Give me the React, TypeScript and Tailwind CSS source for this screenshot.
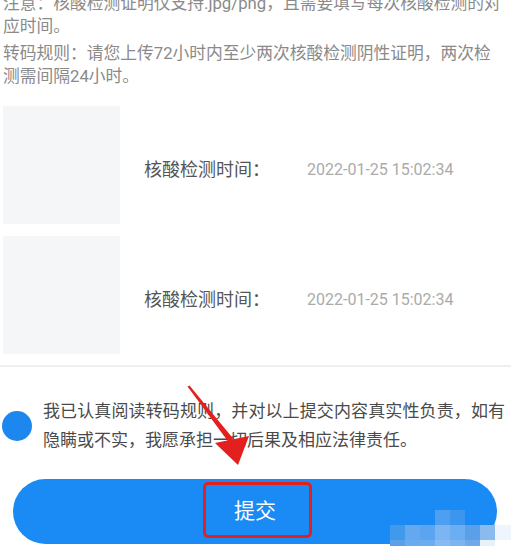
import React from "react";

const FONT = 'Roboto, "Noto Sans CJK SC", "Noto Sans", sans-serif';

function Row() {
  return (
    <div className="flex items-center h-[118px]">
      <div className="w-[117px] h-[118px] bg-[#f4f6f8] shrink-0" />
      <div className="ml-[24px] pt-[10px] text-[18px] leading-[24px] text-[#555555] whitespace-nowrap">
        核酸检测时间：
      </div>
      <div className="ml-[37px] pt-[10px] text-[16px] leading-[24px] text-[#ababab] whitespace-nowrap">
        2022-01-25 15:02:34
      </div>
    </div>
  );
}

const mosaic: { x: number; y: number; w: number; h: number; c: string }[] = [
  { x: 435, y: 510, w: 15, h: 15, c: "#4f9ff0" },
  { x: 450, y: 510, w: 15, h: 15, c: "#3d96ee" },
  { x: 390, y: 525, w: 15, h: 15, c: "#4199ec" },
  { x: 405, y: 525, w: 15, h: 15, c: "#64a9ef" },
  { x: 420, y: 525, w: 15, h: 15, c: "#5ba5f0" },
  { x: 435, y: 525, w: 15, h: 15, c: "#7bb6f3" },
  { x: 450, y: 525, w: 15, h: 15, c: "#6baef1" },
  { x: 465, y: 525, w: 15, h: 15, c: "#5b9fe9" },
  { x: 480, y: 525, w: 15, h: 15, c: "#8bbaef" },
  { x: 495, y: 525, w: 16, h: 15, c: "#eef5fc" },
  { x: 390, y: 540, w: 15, h: 6, c: "#5aa1e9" },
  { x: 405, y: 540, w: 15, h: 6, c: "#69adf1" },
  { x: 420, y: 540, w: 15, h: 6, c: "#6cadf0" },
  { x: 435, y: 540, w: 15, h: 6, c: "#86bcf3" },
  { x: 450, y: 540, w: 15, h: 6, c: "#7ab4f1" },
  { x: 465, y: 540, w: 15, h: 6, c: "#6ea9ec" },
  { x: 480, y: 540, w: 15, h: 6, c: "#e6f1fb" },
  { x: 495, y: 540, w: 16, h: 6, c: "#ffffff" },
];

export default function App() {
  return (
    <div
      className="relative w-[511px] h-[546px] bg-white overflow-hidden"
      style={{ fontFamily: FONT }}
    >
      <div className="-mt-[8px] pl-[3px] text-[16.75px] leading-[23px] text-[#8a8a8a] whitespace-nowrap">
        <p>
          注意：核酸检测证明仅支持.jpg/png，且需要填写每次核酸检测的对
          <br />
          应时间。
        </p>
        <p className="mt-[4px]">
          转码规则：请您上传72小时内至少两次核酸检测阴性证明，两次检
          <br />
          测需间隔24小时。
        </p>
      </div>

      <div className="mt-[18px] pl-[3px] flex flex-col gap-[12px]">
        <Row />
        <Row />
      </div>

      <div className="mt-[11px] h-[2px] bg-[#efefef]" />

      <div className="mt-[30px] flex items-center">
        <div className="ml-[2px] w-[30px] h-[30px] rounded-full bg-[#1b87ef] shrink-0" />
        <div className="ml-[11px] w-[462px] text-[17px] leading-[29px] text-[#4a4a4a] whitespace-nowrap">
          <div className="[text-align-last:justify]">
            我已认真阅读转码规则，并对以上提交内容真实性负责，如有
          </div>
          <div>隐瞒或不实，我愿承担一切后果及相应法律责任。</div>
        </div>
      </div>

      <div className="mt-[24px] ml-[13px] w-[484px] h-[65px] rounded-full bg-[#1a8af5] flex items-center justify-center">
        <span className="text-white text-[21px] leading-none">提交</span>
      </div>

      {/* mosaic watermark */}
      {mosaic.map((m, i) => (
        <div
          key={i}
          className="absolute"
          style={{ left: m.x, top: m.y, width: m.w, height: m.h, background: m.c }}
        />
      ))}

      {/* red highlight box */}
      <div className="absolute left-[203px] top-[482px] w-[109px] h-[56px] border-[3px] border-[#e3201d] rounded-[5px]" />

      {/* red arrow */}
      <svg
        className="absolute left-0 top-0 pointer-events-none"
        width="511"
        height="546"
        viewBox="0 0 511 546"
      >
        <polygon points="187.5,386.5 189.5,385.5 233.5,439 228.5,442" fill="#e3201d" />
        <polygon points="215,443 249,436 238,465" fill="#e3201d" />
      </svg>
    </div>
  );
}
